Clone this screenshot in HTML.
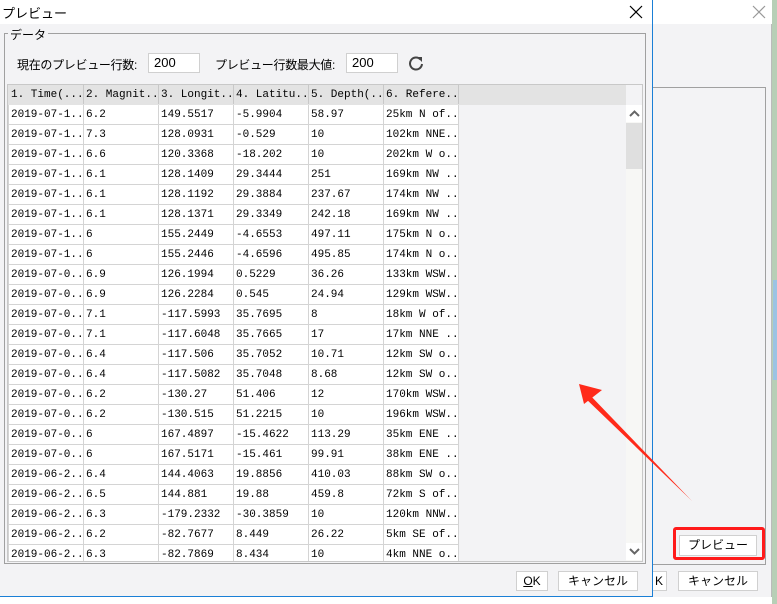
<!DOCTYPE html>
<html><head><meta charset="utf-8"><style>
*{margin:0;padding:0;box-sizing:border-box}
body{width:777px;height:604px;position:relative;overflow:hidden;background:#fff;font-family:"Liberation Sans","Noto Sans CJK JP",sans-serif;font-size:12px;color:#000}
.abs{position:absolute}
.mono{font-family:"Liberation Mono","Noto Sans CJK JP",monospace;font-size:11px}
table{border-collapse:collapse;table-layout:fixed;width:450px}
td{height:20px;border:1px solid #d4d4d4;padding:0 2px;white-space:nowrap;overflow:hidden;background:#fff;line-height:18px}
.hd td{background:#e3e3e3;border-color:#e3e3e3;border-right:1px solid #c8c8c8;height:19px}
.btn{position:absolute;background:#fff;border:1px solid #d0d0d0;text-align:center;line-height:18px;font-size:12px}
.inp{position:absolute;background:#fff;border:1px solid #d0d0d0;height:20px;line-height:18px;padding-left:5px;font-size:13px}
</style></head><body>
<div class="abs" style="left:772px;top:0;width:5px;height:604px;background:#b7cfb6"></div>
<div class="abs" style="left:773px;top:280px;width:4px;height:100px;background:#9cc3e3"></div>
<div class="abs" style="left:652px;top:0;width:120px;height:597px;background:#f3f3f5;border-right:1px solid #bbb"></div>
<div class="abs" style="left:652px;top:0;width:120px;height:24px;background:#fff"></div>
<svg class="abs" style="left:752px;top:5px" width="14" height="14"><path d="M1 1L13 13M13 1L1 13" stroke="#999" stroke-width="1.2"/></svg>
<div class="abs" style="left:652px;top:87px;width:114px;height:478px;border:1px solid #a0a0a0;border-left:none"></div>
<div class="abs" style="left:673px;top:527px;width:92px;height:33px;border:3px solid #ff1a1a;border-radius:3px"></div>
<div class="btn" style="left:679px;top:535px;width:78px;height:21px">プレビュー</div>
<div class="btn" style="left:640px;top:571px;width:27px;height:20px;text-align:right;padding-right:3px">K</div>
<div class="btn" style="left:678px;top:571px;width:80px;height:20px">キャンセル</div>
<div class="abs" style="left:0;top:0;width:653px;height:597px;background:#f3f3f5;border-right:1px solid #1a7fd6;border-bottom:1px solid #1a7fd6"></div>
<div class="abs" style="left:0;top:0;width:652px;height:24px;background:#fff"></div>
<div class="abs" style="left:2px;top:3px;font-size:13px">プレビュー</div>
<svg class="abs" style="left:629px;top:5px" width="14" height="14"><path d="M1 1L13 13M13 1L1 13" stroke="#000" stroke-width="1.2"/></svg>
<div class="abs" style="left:4px;top:33px;width:642px;height:531px;border:1px solid #a0a0a0"></div>
<div class="abs" style="left:8px;top:26px;background:#f3f3f5;padding:0 2px;font-size:12px">データ</div>
<div class="abs" style="left:17px;top:56px;font-size:12px;letter-spacing:-0.3px">現在のプレビュー行数:</div>
<div class="inp" style="left:148px;top:53px;width:52px">200</div>
<div class="abs" style="left:215px;top:56px;font-size:12px;letter-spacing:-0.3px">プレビュー行数最大値:</div>
<div class="inp" style="left:346px;top:53px;width:52px">200</div>
<svg class="abs" style="left:408px;top:55px" width="16" height="16"><path d="M12.5 4.5A6 6 0 1 0 14 9" fill="none" stroke="#444" stroke-width="2"/><path d="M9 2L14 2L14 7Z" fill="#444"/></svg>
<div class="abs" style="left:7px;top:84px;width:636px;height:478px;border:1px solid #c8c8c8;background:#f3f3f5;overflow:hidden">
<div class="abs" style="left:0;top:0;width:618px;height:20px;background:#e3e3e3"></div>
<table class="mono abs" style="left:0;top:0">
<colgroup><col style="width:75px"><col style="width:75px"><col style="width:75px"><col style="width:75px"><col style="width:75px"><col style="width:75px"></colgroup>
<tr class="hd"><td>1. Time(...</td><td>2. Magnit...</td><td>3. Longit...</td><td>4. Latitu...</td><td>5. Depth(...</td><td>6. Refere...</td></tr>
<tr><td>2019-07-1...</td><td>6.2</td><td>149.5517</td><td>-5.9904</td><td>58.97</td><td>25km N of...</td></tr>
<tr><td>2019-07-1...</td><td>7.3</td><td>128.0931</td><td>-0.529</td><td>10</td><td>102km NNE...</td></tr>
<tr><td>2019-07-1...</td><td>6.6</td><td>120.3368</td><td>-18.202</td><td>10</td><td>202km W o...</td></tr>
<tr><td>2019-07-1...</td><td>6.1</td><td>128.1409</td><td>29.3444</td><td>251</td><td>169km NW ...</td></tr>
<tr><td>2019-07-1...</td><td>6.1</td><td>128.1192</td><td>29.3884</td><td>237.67</td><td>174km NW ...</td></tr>
<tr><td>2019-07-1...</td><td>6.1</td><td>128.1371</td><td>29.3349</td><td>242.18</td><td>169km NW ...</td></tr>
<tr><td>2019-07-1...</td><td>6</td><td>155.2449</td><td>-4.6553</td><td>497.11</td><td>175km N o...</td></tr>
<tr><td>2019-07-1...</td><td>6</td><td>155.2446</td><td>-4.6596</td><td>495.85</td><td>174km N o...</td></tr>
<tr><td>2019-07-0...</td><td>6.9</td><td>126.1994</td><td>0.5229</td><td>36.26</td><td>133km WSW...</td></tr>
<tr><td>2019-07-0...</td><td>6.9</td><td>126.2284</td><td>0.545</td><td>24.94</td><td>129km WSW...</td></tr>
<tr><td>2019-07-0...</td><td>7.1</td><td>-117.5993</td><td>35.7695</td><td>8</td><td>18km W of...</td></tr>
<tr><td>2019-07-0...</td><td>7.1</td><td>-117.6048</td><td>35.7665</td><td>17</td><td>17km NNE ...</td></tr>
<tr><td>2019-07-0...</td><td>6.4</td><td>-117.506</td><td>35.7052</td><td>10.71</td><td>12km SW o...</td></tr>
<tr><td>2019-07-0...</td><td>6.4</td><td>-117.5082</td><td>35.7048</td><td>8.68</td><td>12km SW o...</td></tr>
<tr><td>2019-07-0...</td><td>6.2</td><td>-130.27</td><td>51.406</td><td>12</td><td>170km WSW...</td></tr>
<tr><td>2019-07-0...</td><td>6.2</td><td>-130.515</td><td>51.2215</td><td>10</td><td>196km WSW...</td></tr>
<tr><td>2019-07-0...</td><td>6</td><td>167.4897</td><td>-15.4622</td><td>113.29</td><td>35km ENE ...</td></tr>
<tr><td>2019-07-0...</td><td>6</td><td>167.5171</td><td>-15.461</td><td>99.91</td><td>38km ENE ...</td></tr>
<tr><td>2019-06-2...</td><td>6.4</td><td>144.4063</td><td>19.8856</td><td>410.03</td><td>88km SW o...</td></tr>
<tr><td>2019-06-2...</td><td>6.5</td><td>144.881</td><td>19.88</td><td>459.8</td><td>72km S of...</td></tr>
<tr><td>2019-06-2...</td><td>6.3</td><td>-179.2332</td><td>-30.3859</td><td>10</td><td>120km NNW...</td></tr>
<tr><td>2019-06-2...</td><td>6.2</td><td>-82.7677</td><td>8.449</td><td>26.22</td><td>5km SE of...</td></tr>
<tr><td>2019-06-2...</td><td>6.3</td><td>-82.7869</td><td>8.434</td><td>10</td><td>4km NNE o...</td></tr>
</table>
<div class="abs" style="left:618px;top:20px;width:17px;height:456px;background:#f7f7f5"></div>
<div class="abs" style="left:618px;top:20px;width:17px;height:17px;background:#fff"><svg width="17" height="17"><path d="M4 11L8.5 6.5L13 11" fill="none" stroke="#666" stroke-width="2"/></svg></div>
<div class="abs" style="left:618px;top:38px;width:17px;height:46px;background:#dfdfdf"></div>
<div class="abs" style="left:618px;top:458px;width:17px;height:17px;background:#fff"><svg width="17" height="17"><path d="M4 6L8.5 10.5L13 6" fill="none" stroke="#666" stroke-width="2"/></svg></div>
</div>
<div class="btn" style="left:516px;top:571px;width:32px;height:20px"><u>O</u>K</div>
<div class="btn" style="left:558px;top:571px;width:80px;height:20px">キャンセル</div>
<svg class="abs" style="left:0;top:0" width="777" height="604">
<polygon points="692,501 587,392 583,396" fill="#ff2a1a"/>
<polygon points="579,384 602,390 584,404" fill="#ff2a1a"/>
</svg>
</body></html>
